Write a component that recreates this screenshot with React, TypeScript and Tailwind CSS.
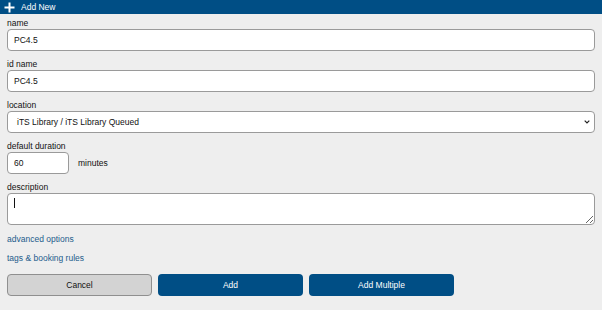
import React from "react";

const font = { fontFamily: '"Liberation Sans", Arial, sans-serif' };

function Label({ children }: { children: React.ReactNode }) {
  return <div className="h-[10px] leading-[10px] text-[8.5px] text-[#111] mb-[1px]">{children}</div>;
}

export default function App() {
  return (
    <div className="w-[602px] h-[310px] bg-[#eeeeee] overflow-hidden text-[8.5px] text-[#111]" style={font}>
      <div className="h-[14px] bg-[#004e85] flex items-center pl-[4px] gap-[6px] text-white">
        <svg width="11" height="11" viewBox="0 0 11 11">
          <path d="M5.5 0.5v10M0.5 5.5h10" stroke="#fff" strokeWidth="2" />
        </svg>
        <span className="text-[8.5px] leading-none">Add New</span>
      </div>
      <div className="px-[7px] pt-[4px] pr-[7px] flex flex-col">
        <div className="mb-[8px]">
          <Label>name</Label>
          <input
            readOnly
            value="PC4.5"
            className="block w-full h-[22px] bg-white border border-[#9a9a9a] rounded-[4px] px-[6px] text-[8.5px] text-[#111] outline-none"
            style={font}
          />
        </div>
        <div className="mb-[8px]">
          <Label>id name</Label>
          <input
            readOnly
            value="PC4.5"
            className="block w-full h-[22px] bg-white border border-[#9a9a9a] rounded-[4px] px-[6px] text-[8.5px] text-[#111] outline-none"
            style={font}
          />
        </div>
        <div className="mb-[8px]">
          <Label>location</Label>
          <div className="relative">
            <div className="h-[22px] bg-white border border-[#9a9a9a] rounded-[4px] pl-[9px] flex items-center text-[8.5px] text-[#111]">
              iTS Library / iTS Library Queued
            </div>
            <svg className="absolute right-[5px] top-[9px]" width="6" height="4" viewBox="0 0 6 4">
              <path d="M0.7 0.7L3 3L5.3 0.7" stroke="#222" strokeWidth="1.2" fill="none" />
            </svg>
          </div>
        </div>
        <div className="mb-[8px]">
          <Label>default duration</Label>
          <div className="flex items-center gap-[9px]">
            <input
              readOnly
              value="60"
              className="block w-[62px] h-[22px] bg-white border border-[#9a9a9a] rounded-[4px] px-[6px] text-[8.5px] text-[#111] outline-none"
              style={font}
            />
            <span>minutes</span>
          </div>
        </div>
        <div className="mb-[9px]">
          <Label>description</Label>
          <div className="relative">
            <textarea
              readOnly
              className="block w-full h-[32px] bg-white border border-[#9a9a9a] rounded-[4px] px-[6px] text-[8.5px] outline-none resize-y"
              style={font}
            />
            <div className="absolute left-[7px] top-[5px] w-[1px] h-[10px] bg-[#111]" />
          </div>
        </div>
        <div className="h-[10px] leading-[10px] text-[#1d5c8c] mb-[9px]">advanced options</div>
        <div className="h-[10px] leading-[10px] text-[#1d5c8c] mb-[11px]">tags &amp; booking rules</div>
        <div className="flex gap-[6px]">
          <button className="w-[145px] h-[22px] bg-[#d3d3d3] border border-[#8f8f8f] rounded-[4px] text-[8.5px] text-[#111]" style={font}>
            Cancel
          </button>
          <button className="w-[145px] h-[22px] bg-[#004e85] rounded-[4px] text-[8.5px] text-white" style={font}>
            Add
          </button>
          <button className="w-[145px] h-[22px] bg-[#004e85] rounded-[4px] text-[8.5px] text-white" style={font}>
            Add Multiple
          </button>
        </div>
      </div>
    </div>
  );
}
